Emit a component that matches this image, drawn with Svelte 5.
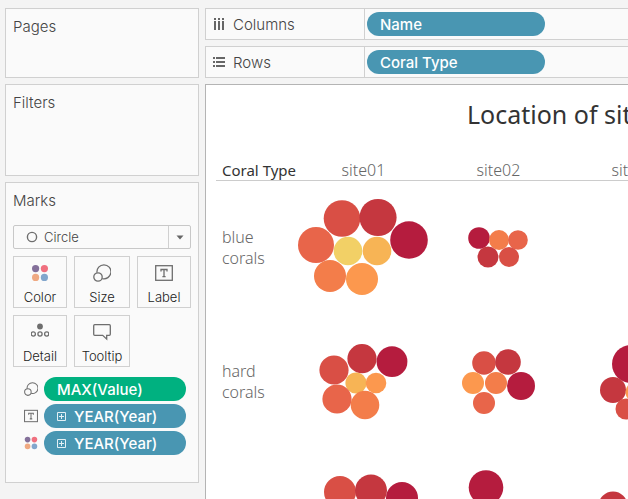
<script>
  const palette = {
    wine: '#b51c3e',
    crimson: '#c5373f',
    red: '#d94f45',
    coral: '#e8654a',
    orange: '#f37d4a',
    amber: '#fc984e',
    gold: '#f7b455',
    yellow: '#f2d066'
  };

  const columns = ['site01', 'site02', 'site03'];

  // Each bubble is [x, y, radius, colour] inside its 135 by 134 cell.
  const rows = [
    {
      name: 'blue corals',
      cells: [
        [
          [46, 37.5, 18.3, 'red'], [82, 36.5, 18.6, 'crimson'], [113, 59, 18.8, 'wine'],
          [20, 64, 18, 'coral'], [52, 70, 14.3, 'yellow'], [81, 70, 14.3, 'gold'],
          [34, 95, 16, 'orange'], [66, 98, 16, 'amber']
        ],
        [
          [48, 57, 10.8, 'wine'], [68, 59, 10, 'orange'], [87, 59, 9.8, 'coral'],
          [57, 76, 10.5, 'crimson'], [78, 76, 10, 'red']
        ],
        []
      ]
    },
    {
      name: 'hard corals',
      cells: [
        [
          [38, 55, 14.6, 'red'], [66, 43.7, 14.6, 'crimson'], [96, 46.7, 15.4, 'wine'],
          [60, 68, 10.6, 'gold'], [80, 68, 10.3, 'amber'],
          [41, 84, 14.6, 'coral'], [69, 90, 14.3, 'orange']
        ],
        [
          [53, 48, 11.8, 'red'], [77, 47, 12.8, 'crimson'], [90, 71, 14, 'wine'],
          [42, 68, 11, 'amber'], [65, 68, 11, 'orange'], [53, 88, 11, 'coral']
        ],
        [
          [65, 49, 19, 'wine'], [47, 75, 13, 'crimson'], [60, 94, 10.5, 'red'], [70, 77, 10.5, 'amber']
        ]
      ]
    },
    {
      name: '',
      cells: [
        [[44, 43, 16, 'red'], [75, 41.5, 16, 'crimson'], [106, 49, 16, 'wine']],
        [[55, 38.5, 17.3, 'wine']],
        [[47, 57, 14.5, 'crimson']]
      ]
    }
  ];

  const cards = [
    { icon: 'color', label: 'Color' },
    { icon: 'size', label: 'Size' },
    { icon: 'label', label: 'Label' },
    { icon: 'detail', label: 'Detail' },
    { icon: 'tooltip', label: 'Tooltip' }
  ];

  const pills = [
    { icon: 'size', text: 'MAX(Value)', kind: 'measure', expand: false },
    { icon: 'label', text: 'YEAR(Year)', kind: 'dimension', expand: true },
    { icon: 'color', text: 'YEAR(Year)', kind: 'dimension', expand: true }
  ];
</script>

{#snippet glyph(name, size)}
  <svg class="glyph" width={size} height={size} viewBox="0 0 18 18" fill="none" stroke="#6e6e6e" stroke-width="1.3" aria-hidden="true">
    {#if name === 'color'}
      <g stroke="none">
        <circle cx="4.6" cy="4.6" r="3.6" fill="#84709a" />
        <circle cx="13.4" cy="4.6" r="3.6" fill="#f0707f" />
        <circle cx="4.6" cy="13.4" r="3.6" fill="#efa982" />
        <circle cx="13.4" cy="13.4" r="3.6" fill="#82a6cc" />
      </g>
    {:else if name === 'size'}
      <path d="M4 8.7 A7 7 0 1 1 9.2 14.6" />
      <circle cx="5" cy="13" r="4.2" />
    {:else if name === 'label'}
      <rect x="0.7" y="1.7" width="16.6" height="14.6" />
      <path d="M6 7.4V5.5h6v1.9M9 5.5v7.2M7.4 12.7h3.2" />
    {:else if name === 'detail'}
      <circle cx="9" cy="3.5" r="2.9" fill="#6e6e6e" stroke="none" />
      <circle cx="2.3" cy="11" r="2.1" />
      <circle cx="9" cy="11" r="2.1" />
      <circle cx="15.7" cy="11" r="2.1" />
    {:else}
      <path d="M1.7 1.7h14.6q1 0 1 1v8.6q0 1-1 1h-2.6v3.8l-4-3.8H1.7q-1 0-1-1V2.7q0-1 1-1z" />
    {/if}
  </svg>
{/snippet}

<div class="app">
  <aside>
    <section class="panel pages"><h2>Pages</h2></section>
    <section class="panel filters"><h2>Filters</h2></section>
    <section class="panel marks">
      <h2>Marks</h2>
      <div class="picker">
        <select aria-label="Mark type">
          <option>Circle</option>
        </select>
        <svg class="ring" width="12" height="12" viewBox="0 0 12 12" aria-hidden="true">
          <circle cx="6" cy="6" r="4.6" fill="none" stroke="#6e6e6e" stroke-width="1.4" />
        </svg>
        <span class="arrow"><svg width="8" height="5" viewBox="0 0 8 5" aria-hidden="true"><path d="M0.5 0.5h7L4 4.5z" fill="#666" /></svg></span>
      </div>
      <div class="cards">
        {#each cards as card}
          <button class="card">{@render glyph(card.icon, 18)}<span>{card.label}</span></button>
        {/each}
      </div>
      <ul class="encodings">
        {#each pills as pill}
          <li>
            {@render glyph(pill.icon, 14)}
            <button class="pill {pill.kind}">
              {#if pill.expand}
                <svg width="9" height="9" viewBox="0 0 9 9" fill="none" stroke="#e4f0f5" aria-hidden="true">
                  <path d="M0.5 0.5h8v8h-8zM4.5 2v5M2 4.5h5" />
                </svg>
              {/if}
              {pill.text}
            </button>
          </li>
        {/each}
      </ul>
    </section>
  </aside>

  <main>
    <div class="shelf">
      <div class="shelf-name">
        <svg width="12" height="12" viewBox="0 0 12 12" fill="#666" aria-hidden="true">
          <path d="M1 0h2v2H1zM5 0h2v2H5zM9 0h2v2H9zM1 3h2v9H1zM5 3h2v9H5zM9 3h2v9H9z" />
        </svg>
        <span>Columns</span>
      </div>
      <button class="pill dimension">Name</button>
    </div>
    <div class="shelf">
      <div class="shelf-name">
        <svg width="12" height="12" viewBox="0 0 12 12" fill="#666" aria-hidden="true">
          <path d="M0 1h2v2H0zM0 5h2v2H0zM0 9h2v2H0zM3 1h9v2H3zM3 5h9v2H3zM3 9h9v2H3z" />
        </svg>
        <span>Rows</span>
      </div>
      <button class="pill dimension">Coral Type</button>
    </div>

    <section class="view">
      <h1>Location of sites</h1>
      <table>
        <thead>
          <tr>
            <th class="corner" scope="col">Coral Type</th>
            {#each columns as column}<th scope="col">{column}</th>{/each}
          </tr>
        </thead>
        <tbody>
          {#each rows as row}
            <tr>
              <th scope="row"><span>{row.name}</span></th>
              {#each row.cells as bubbles}
                <td>
                  <svg width="135" height="134" viewBox="0 0 135 134" aria-hidden="true">
                    {#each bubbles as [x, y, r, tone]}
                      <circle cx={x} cy={y} {r} fill={palette[tone]} />
                    {/each}
                  </svg>
                </td>
              {/each}
            </tr>
          {/each}
        </tbody>
      </table>
    </section>
  </main>
</div>

<style>
  :global(body) {
    background: #f4f4f4;
  }

  .app {
    display: flex;
    gap: 6px;
    box-sizing: border-box;
    height: 100vh;
    padding: 8px 0 0 5px;
    overflow: hidden;
    color: #444;
    font: 300 15px/20px Inter, "Open Sans", sans-serif;
  }

  button,
  select {
    margin: 0;
    font: inherit;
    color: inherit;
  }

  aside {
    display: flex;
    flex: none;
    flex-direction: column;
    gap: 6px;
    width: 194px;
  }

  .panel {
    flex: none;
    box-sizing: border-box;
    padding: 8px 7px;
    border: 1px solid #d0d0d0;
    background: #fafafa;
  }

  .pages {
    min-height: 70px;
  }

  .filters {
    min-height: 92px;
  }

  .marks {
    min-height: 301px;
  }

  h2 {
    margin: 0;
    font: inherit;
  }

  .picker {
    position: relative;
    height: 24px;
    margin: 14px 0 7px;
  }

  select {
    appearance: none;
    box-sizing: border-box;
    width: 100%;
    height: 24px;
    padding: 0 30px;
    border: 1px solid #c8c8c8;
    border-radius: 2px;
    background: #fafafa;
    font-size: 13px;
    line-height: 22px;
  }

  .ring {
    position: absolute;
    top: 6px;
    left: 13px;
  }

  .arrow {
    position: absolute;
    top: 1px;
    right: 1px;
    bottom: 1px;
    display: flex;
    align-items: center;
    justify-content: center;
    width: 21px;
    border-left: 1px solid #d0d0d0;
    pointer-events: none;
  }

  .cards {
    display: grid;
    grid-template-columns: 54fr 56fr 54fr;
    gap: 7px;
  }

  .card {
    display: flex;
    flex-direction: column;
    gap: 6px;
    align-items: center;
    height: 52px;
    padding: 7px 0 0;
    border: 1px solid #d0d0d0;
    background: #fafafa;
    color: #222;
    font-size: 13px;
    line-height: 18px;
  }

  .glyph {
    flex: none;
  }

  .encodings {
    display: flex;
    flex-direction: column;
    gap: 3px;
    margin: 10px 5px 0 11px;
    padding: 0;
    list-style: none;
  }

  .encodings li {
    display: flex;
    gap: 6px;
    align-items: center;
  }

  .encodings .pill {
    flex: 1;
  }

  .pill {
    display: flex;
    gap: 8px;
    align-items: center;
    width: 178px;
    height: 24px;
    padding: 1px 13px 0;
    border: 0;
    border-radius: 12px;
    color: #fff;
    font-weight: 500;
  }

  .measure {
    background: #00b180;
  }

  .dimension {
    background: #4996b2;
  }

  main {
    display: flex;
    flex: 1;
    flex-direction: column;
    gap: 6px;
    min-width: 0;
  }

  .shelf {
    display: flex;
    flex: none;
    gap: 2px;
    align-items: center;
    box-sizing: border-box;
    height: 32px;
    border: 1px solid #d0d0d0;
    border-right: 0;
    background: #fafafa;
  }

  .shelf-name {
    display: flex;
    gap: 8px;
    align-items: center;
    align-self: stretch;
    box-sizing: border-box;
    width: 159px;
    padding-left: 7px;
    border-right: 1px solid #d0d0d0;
  }

  .shelf-name span {
    padding-top: 2px;
  }

  .view {
    flex: 1;
    min-height: 0;
    padding: 13px 0 0 10px;
    overflow: hidden;
    border: 1px solid #b4b4b4;
    border-width: 1px 0 0 1px;
    background: #fff;
    font-family: "Noto Sans", sans-serif;
  }

  h1 {
    margin: 0 0 31px;
    padding-left: 251px;
    color: #333;
    font-size: 25px;
    font-weight: 400;
    line-height: 32px;
    white-space: nowrap;
  }

  table {
    width: 485px;
    border-collapse: collapse;
    table-layout: fixed;
  }

  th,
  td {
    padding: 0;
    font-weight: 300;
    color: #666;
  }

  th {
    font-size: 16px;
  }

  thead th {
    height: 19px;
    border-bottom: 1px solid #ccc;
    line-height: 19px;
  }

  thead .corner {
    width: 80px;
    color: #333;
    font-size: 15px;
    font-weight: 400;
    white-space: nowrap;
  }

  thead .corner,
  tbody th {
    padding-left: 6px;
    box-sizing: border-box;
    text-align: left;
  }

  tbody th {
    line-height: 21px;
  }

  tbody th span {
    display: block;
    width: 50px;
  }

  td svg {
    display: block;
    overflow: visible;
  }
</style>
